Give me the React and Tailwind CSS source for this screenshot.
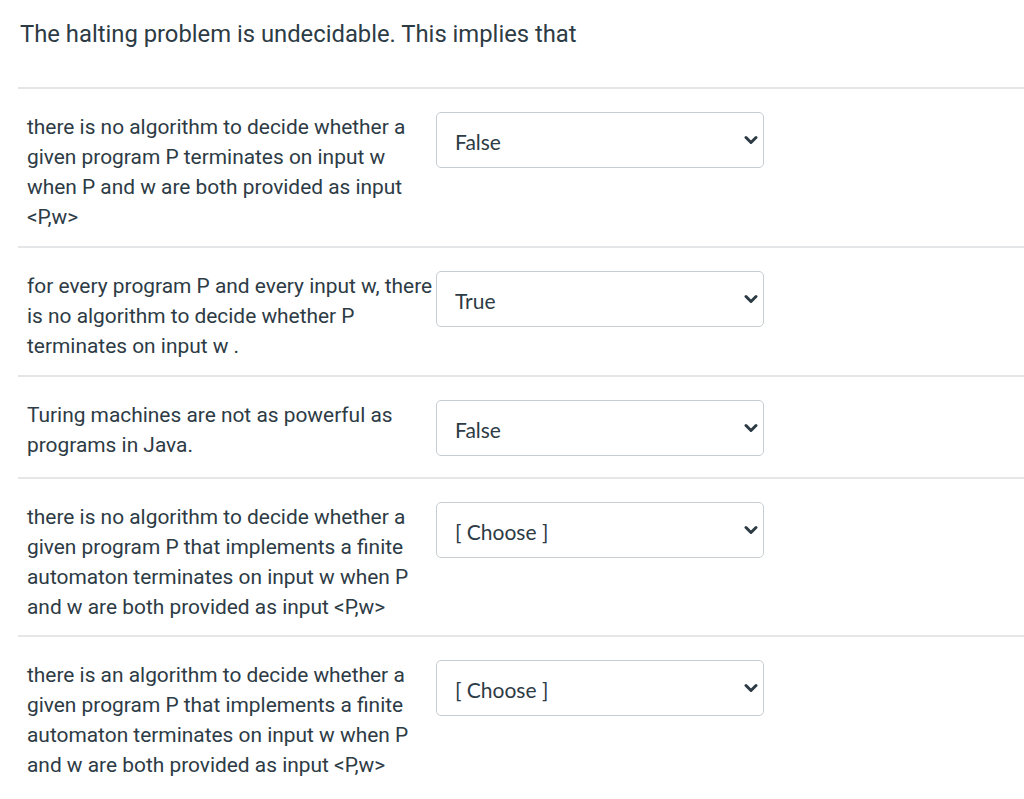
const rows = [
  {
    text: 'there is no algorithm to decide whether a given program P terminates on input w when P and w are both provided as input <P,w>',
    value: 'False',
    pb: 'pb-[14px]',
  },
  {
    text: 'for every program P and every input w, there is no algorithm to decide whether P terminates on input w .',
    value: 'True',
    pb: 'pb-[14px]',
  },
  {
    text: 'Turing machines are not as powerful as programs in Java.',
    value: 'False',
    pb: 'pb-[17px]',
  },
  {
    text: 'there is no algorithm to decide whether a given program P that implements a finite automaton terminates on input w when P and w are both provided as input <P,w>',
    value: '[ Choose ]',
    pb: 'pb-[13px]',
  },
  {
    text: 'there is an algorithm to decide whether a given program P that implements a finite automaton terminates on input w when P and w are both provided as input <P,w>',
    value: '[ Choose ]',
    pb: 'pb-[14px]',
  },
];

function Chevron() {
  return (
    <svg width="14" height="10" viewBox="0 0 14 10" className="text-[#2d3b45]">
      <path d="M2 2.5 L7 7.5 L12 2.5" fill="none" stroke="currentColor" strokeWidth="3" strokeLinecap="round" strokeLinejoin="round" />
    </svg>
  );
}

function Row({ text, value, pb, last }) {
  return (
    <div className={`flex items-start pl-[9px] pt-[23px] ${pb} ${last ? '' : 'border-b-2 border-[#e4e6e8]'}`}>
      <div className="w-[409px] shrink-0 text-[20.9px] leading-[30px] text-[#2d3b45] font-['Roboto',sans-serif]">
        {text}
      </div>
      <div className="w-[328px] h-[56px] flex items-center justify-between pl-[18px] pr-[5px] border border-[#c7cdd1] rounded-[5px] bg-white">
        <span className="text-[21px] pt-[3px] text-[#2d3b45] font-['Lato',sans-serif]">{value}</span>
        <Chevron />
      </div>
    </div>
  );
}

export default function App() {
  return (
    <div className="w-[1024px] min-h-[799px] bg-white overflow-hidden">
      <h1 className="pl-[2px] pt-[18px] pb-[37px] text-[23.8px] leading-[32px] font-normal text-[#2d3b45] font-['Roboto',sans-serif] border-b-2 border-[#e4e6e8] ml-[18px]">
        The halting problem is undecidable. This implies that
      </h1>
      <div className="ml-[18px]">
        {rows.map((r, i) => (
          <Row key={i} {...r} last={i === rows.length - 1} />
        ))}
      </div>
    </div>
  );
}
